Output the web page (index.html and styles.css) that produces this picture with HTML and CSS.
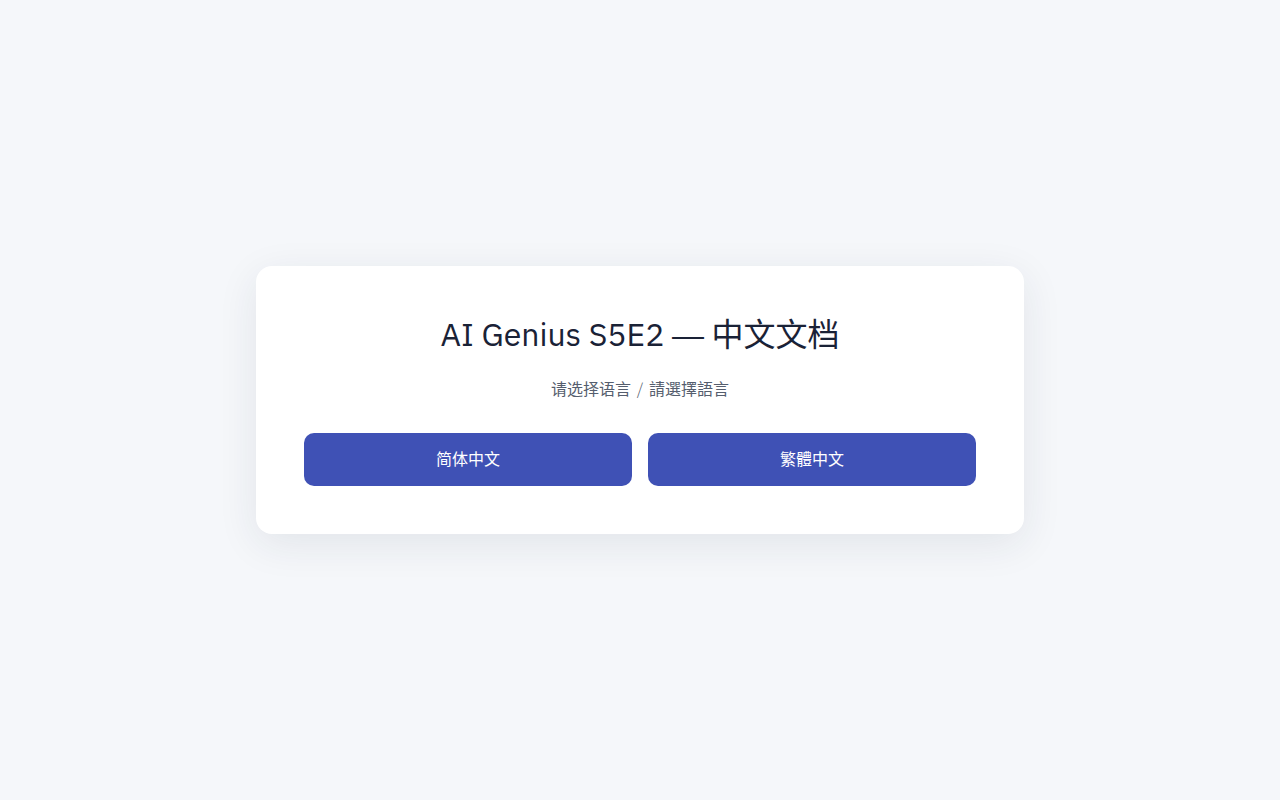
FILE: index.html
```html
<!DOCTYPE html>
<html lang="zh">
<head>
  <meta charset="UTF-8">
  <meta name="viewport" content="width=device-width, initial-scale=1.0">
  <title>AI Genius S5E2 — 中文文档</title>
  <link rel="stylesheet" href="styles.css">
</head>
<body>
  <main class="card">
    <h1>AI Genius S5E2 <span class="dash">—</span> 中文文档</h1>
    <p class="subtitle">请选择语言 <span class="slash">/</span> 請選擇語言</p>
    <div class="choices">
      <a class="choice" href="#zh-hans">简体中文</a>
      <a class="choice" href="#zh-hant">繁體中文</a>
    </div>
  </main>
</body>
</html>
```

FILE: styles.css
```css
* {
  margin: 0;
  padding: 0;
  box-sizing: border-box;
}

body {
  font-family: "IBM Plex Sans", "Noto Sans", "Noto Sans CJK SC", sans-serif;
  background-color: #f5f7fa;
  color: #1a2236;
  min-height: 100vh;
  display: flex;
  align-items: center;
  justify-content: center;
}

/* punctuation is drawn thinner and wider in the original */
.dash {
  font-family: "Liberation Sans", sans-serif;
  font-weight: 300;
  line-height: 1;
}

.slash {
  font-family: "Noto Sans CJK SC", sans-serif;
  font-weight: 300;
  line-height: 1;
  padding: 0 2px;
}

.card {
  width: 768px;
  background: #fff;
  border-radius: 16px;
  padding: 48px;
  text-align: center;
  box-shadow: 0 10px 40px rgba(30, 40, 70, 0.09);
}

h1 {
  font-size: 32px;
  font-weight: 400;
  line-height: 40px;
  margin-bottom: 23px;
}

.subtitle {
  font-size: 16px;
  line-height: 24px;
  color: #555e6e;
  margin-bottom: 32px;
}

.choices {
  display: grid;
  grid-template-columns: 1fr 1fr;
  gap: 16px;
}

.choice {
  display: block;
  background: #3f51b5;
  color: #fff;
  text-decoration: none;
  font-size: 16px;
  line-height: 25px;
  padding: 14px 16px;
  border-radius: 10px;
}
```
